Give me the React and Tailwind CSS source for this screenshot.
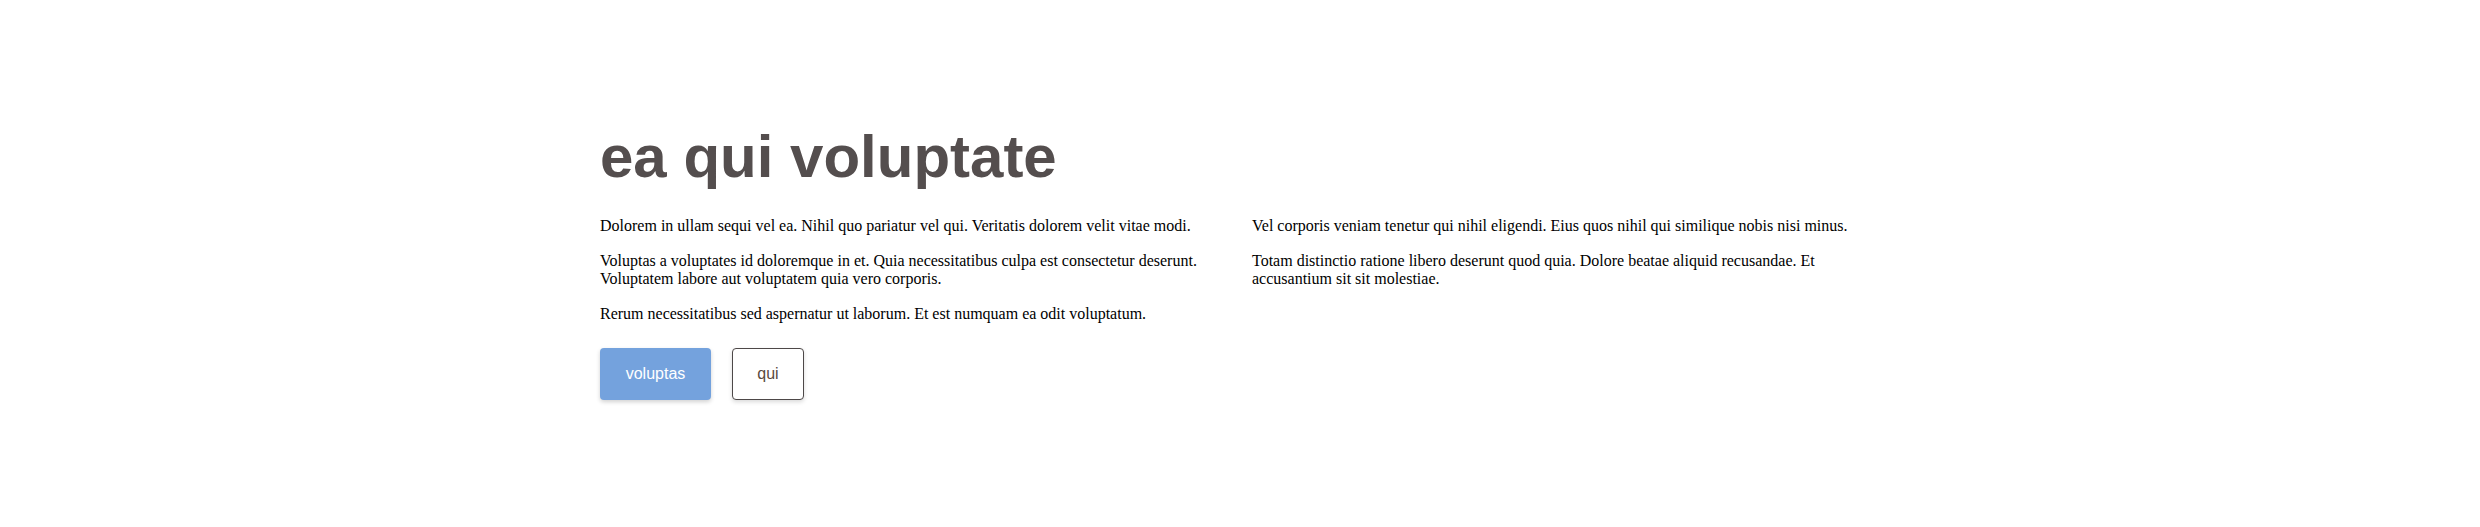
import React from "react";

const leftParas = [
  "Dolorem in ullam sequi vel ea. Nihil quo pariatur vel qui. Veritatis dolorem velit vitae modi.",
  "Voluptas a voluptates id doloremque in et. Quia necessitatibus culpa est consectetur deserunt. Voluptatem labore aut voluptatem quia vero corporis.",
  "Rerum necessitatibus sed aspernatur ut laborum. Et est numquam ea odit voluptatum.",
];

const rightParas = [
  "Vel corporis veniam tenetur qui nihil eligendi. Eius quos nihil qui similique nobis nisi minus.",
  "Totam distinctio ratione libero deserunt quod quia. Dolore beatae aliquid recusandae. Et accusantium sit sit molestiae.",
];

function App() {
  return (
    <div className="min-h-[527px] bg-white pt-[127px]">
      <div className="w-[1280px] mx-auto">
        {/* Title */}
        <h1 className="font-['Liberation_Sans',Arial,sans-serif] font-bold text-[60px] leading-[60px] text-[#544e4e] mb-[30px]">
          ea qui voluptate
        </h1>

        {/* Copy */}
        <div className="grid grid-cols-2 gap-x-6 font-['Liberation_Serif','Times_New_Roman',serif] text-[16px] leading-[1.15] text-black">
          <div className="flex flex-col gap-[16.5px]">
            {leftParas.map((p, i) => (
              <p key={i}>{p}</p>
            ))}
          </div>
          <div className="flex flex-col gap-[16.5px]">
            {rightParas.map((p, i) => (
              <p key={i}>{p}</p>
            ))}
          </div>
        </div>

        {/* Actions */}
        <div className="flex items-center gap-[21px] mt-[24px] font-['Liberation_Sans',Arial,sans-serif] text-[16px]">
          <button className="w-[111px] h-[52px] rounded-[4px] bg-[#74a2dd] text-white shadow-[0_2px_4px_rgba(0,0,0,0.18)]">
            voluptas
          </button>
          <button className="w-[72px] h-[52px] rounded-[4px] border border-[#4d4848] bg-white text-[#5a4a40] shadow-[0_2px_4px_rgba(0,0,0,0.15)]">
            qui
          </button>
        </div>
      </div>
    </div>
  );
}

export default App;
